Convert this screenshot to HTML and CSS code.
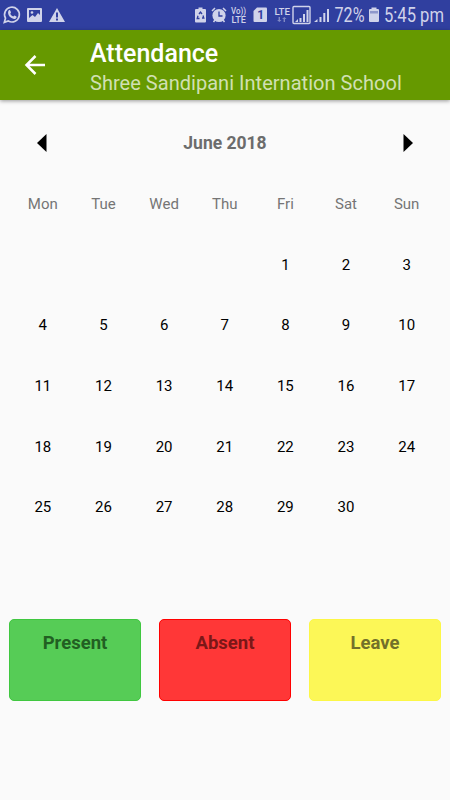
FILE: index.html
```html
<!DOCTYPE html>
<html lang="en">
<head>
    <meta charset="UTF-8">
    <meta name="viewport" content="width=device-width, initial-scale=1.0">
    <title>Attendance</title>
    <link rel="stylesheet" href="styles.css">
</head>
<body>
    <div class="status-bar">
        <svg class="notifications" width="70" height="30" viewBox="0 0 70 30">
            <!-- chat -->
            <path class="line" stroke-width="1.7" d="M4.3 22.4l1.2-4.2a7.4 7.4 0 1 1 2.8 2.8z"/>
            <path class="fill" d="M8.6 10.5c.5-.6 1.3-.7 1.6 0l.8 1.8c.1.4-.7 1.2-.7 1.4.6 1.3 1.6 2.2 3 2.8.3 0 .9-1.1 1.3-1l1.8.9c.6.4-.1 1.9-.9 2.3-1.7.7-3.9-.3-5.4-1.7-1.5-1.5-2.8-4.2-1.5-6.5z"/>
            <!-- picture -->
            <path class="fill" fill-rule="evenodd" d="M28 8h13a1 1 0 0 1 1 1v12a1 1 0 0 1-1 1H28a1 1 0 0 1-1-1V9a1 1 0 0 1 1-1zM29 10v8l3.500-3 2.500 2 3-4 2 2v-5z"/>
            <circle class="fill" cx="32" cy="12.5" r="1.3"/>
            <!-- warning -->
            <path class="fill" fill-rule="evenodd" d="M57 8l8 14H49zM56 12.5v5h2v-5zM56 18.500v2h2v-2z"/>
        </svg>
        <div class="status-right">
            <svg width="137" height="30" viewBox="194 0 137 30">
                <!-- power saving -->
                <path class="fill" d="M198.500 9V7.500h4V9h2.500a1 1 0 0 1 1 1v11.500a1 1 0 0 1-1 1h-9a1 1 0 0 1-1-1V10a1 1 0 0 1 1-1z"/>
                <path class="cut" d="M199 14l1.500-2 1.500 2M203 15.500l.8 2.500H202M199.500 18.500h-2.300l.8-2.700"/>
                <!-- alarm -->
                <circle class="fill" cx="219" cy="15.5" r="6.6"/>
                <path class="cut" d="M219 11.500v4.500h3.500"/>
                <path class="line" stroke-width="1.5" d="M212 11l3-3M226 11l-3-3M215 20l-1.500 2M223 20l1.500 2"/>
                <text class="tiny" x="231" y="14.2" textLength="15" lengthAdjust="spacingAndGlyphs">Vo))</text>
                <text class="tiny" x="231.5" y="22.5" textLength="14.5" lengthAdjust="spacingAndGlyphs">LTE</text>
                <!-- sim -->
                <path class="fill" d="M257 7.500h9a1 1 0 0 1 1 1V21a1 1 0 0 1-1 1h-11.500a1 1 0 0 1-1-1V11z"/>
                <text class="sim" x="257.3" y="19">1</text>
                <text class="tiny" x="274.5" y="15" textLength="15.5" lengthAdjust="spacingAndGlyphs">LTE</text>
                <path class="fill dim" d="M280 17v3h1.500l-2.200 2-2.200-2h1.500v-3zM283.600 22v-3h-1.500l2.200-2 2.200 2h-1.500v3z"/>
                <!-- signal -->
                <rect class="line" x="293" y="6.5" width="17" height="17" rx="1" stroke-width="1.4"/>
                <path class="line" stroke-width="2" d="M300.500 22v-4M304 22v-8M307.500 22v-12"/>
                <path class="fill" d="M295 22l3-3v3zM314 22l3.500-3v3z"/>
                <path class="line" stroke-width="2" d="M320.500 22v-5M324.300 22v-9M328 22V9"/>
            </svg>
            <svg width="119" height="30" viewBox="331 0 119 30">
                <text class="status-text" x="334.5" y="22" textLength="30" lengthAdjust="spacingAndGlyphs">72%</text>
                <!-- battery -->
                <path class="fill" d="M371.500 9V7.500h5V9h1.500a1 1 0 0 1 1 1v11a1 1 0 0 1-1 1h-8a1 1 0 0 1-1-1V10a1 1 0 0 1 1-1z"/>
                <path class="used" d="M370 11h8v2.500h-8z"/>
                <text class="status-text" x="384" y="22" textLength="60" lengthAdjust="spacingAndGlyphs">5:45 pm</text>
            </svg>
        </div>
    </div>

    <div class="toolbar">
        <svg class="back" width="20" height="20" viewBox="0 0 20 20">
            <path d="M20 10H2M10.500 1L1.500 10l9 9"/>
        </svg>
        <div class="titles">
            <h1>Attendance</h1>
            <p>Shree Sandipani Internation School</p>
        </div>
    </div>

    <div class="calendar">
        <div class="month">
            <svg width="10" height="18" viewBox="0 0 10 18"><path d="M9.500 0v18L0 9z"/></svg>
            <h2>June 2018</h2>
            <svg width="10" height="18" viewBox="0 0 10 18"><path d="M.5 0v18L10 9z"/></svg>
        </div>
        <div class="days">
            <span class="weekday">Mon</span>
            <span class="weekday">Tue</span>
            <span class="weekday">Wed</span>
            <span class="weekday">Thu</span>
            <span class="weekday">Fri</span>
            <span class="weekday">Sat</span>
            <span class="weekday">Sun</span>
            <span class="first">1</span>
            <span>2</span>
            <span>3</span>
            <span>4</span>
            <span>5</span>
            <span>6</span>
            <span>7</span>
            <span>8</span>
            <span>9</span>
            <span>10</span>
            <span>11</span>
            <span>12</span>
            <span>13</span>
            <span>14</span>
            <span>15</span>
            <span>16</span>
            <span>17</span>
            <span>18</span>
            <span>19</span>
            <span>20</span>
            <span>21</span>
            <span>22</span>
            <span>23</span>
            <span>24</span>
            <span>25</span>
            <span>26</span>
            <span>27</span>
            <span>28</span>
            <span>29</span>
            <span>30</span>
        </div>
    </div>

    <div class="summary">
        <div class="card present">Present</div>
        <div class="card absent">Absent</div>
        <div class="card leave">Leave</div>
    </div>
</body>
</html>
```
FILE: styles.css
```css
* {
    box-sizing: border-box;
}
body {
    margin: 0;
    height: 800px;
    overflow: hidden;
    font-family: Roboto, "Liberation Sans", sans-serif;
    background-color: #fafafa;
}
svg {
    display: block;
    overflow: visible;
}
h1, h2, p {
    margin: 0;
}

/* status bar */
.status-bar {
    display: flex;
    justify-content: space-between;
    height: 30px;
    background-color: #303f9f;
}
.status-right {
    display: flex;
}
.fill {
    fill: #d0d3ea;
}
.line {
    fill: none;
    stroke: #d0d3ea;
}
.cut {
    fill: none;
    stroke: #303f9f;
    stroke-width: 1.3;
}
.used {
    fill: #8f97cb;
}
.dim {
    opacity: 0.5;
}
.tiny {
    font-size: 8.6px;
    font-weight: 500;
    fill: #d0d3ea;
}
.sim {
    font-size: 12px;
    font-weight: 700;
    fill: #303f9f;
}
.status-text {
    font-size: 19.5px;
    fill: #d0d3ea;
}

/* toolbar */
.toolbar {
    display: flex;
    align-items: center;
    height: 70px;
    padding-left: 25px;
    background-color: #669900;
    box-shadow: 0 1px 4px rgba(0, 0, 0, 0.4);
}
.back path {
    fill: none;
    stroke: #fff;
    stroke-width: 2.5;
}
.titles {
    margin-left: 45px;
    padding-top: 4px;
}
.titles h1 {
    font-size: 25px;
    font-weight: 500;
    line-height: 31px;
    color: #fff;
}
.titles p {
    font-size: 20px;
    line-height: 28px;
    letter-spacing: 0.03px;
    color: #d1e0b3;
}

/* calendar */
.calendar {
    padding: 13px 13px 0 12.5px;
}
.month {
    display: flex;
    justify-content: space-between;
    align-items: center;
    height: 60.6px;
    padding: 0 24px 0 24.5px;
}
.month h2 {
    font-size: 17.5px;
    font-weight: 700;
    color: #6c6c6c;
}
.days {
    display: grid;
    grid-template-columns: repeat(7, 1fr);
    grid-template-rows: 61px;
    grid-auto-rows: 60.6px;
}
.days span {
    display: flex;
    justify-content: center;
    align-items: center;
    font-size: 15px;
    color: #000;
}
.days .weekday {
    color: #757575;
}
.days .first {
    grid-column: 5;
}

/* totals */
.summary {
    display: flex;
    gap: 18px;
    margin-top: 81.4px;
    padding: 0 9px;
}
.card {
    flex: 1;
    height: 82px;
    padding-top: 12px;
    border: 1px solid;
    border-radius: 5px;
    font-size: 18.5px;
    font-weight: 700;
    line-height: 22px;
    text-align: center;
}
.present {
    background-color: #56cc56;
    border-color: #40c740;
    color: #225f22;
}
.absent {
    background-color: #ff3737;
    border-color: #ff0000;
    color: #7b1717;
}
.leave {
    background-color: #fcf757;
    border-color: #fcf746;
    color: #73702a;
}
```
